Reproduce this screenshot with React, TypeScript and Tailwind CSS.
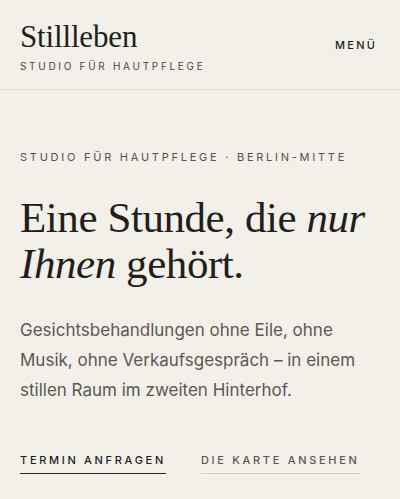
export default function App() {
  const serif = { fontFamily: '"Liberation Serif", "DejaVu Serif", serif' };
  return (
    <div className="min-h-[499px] w-full bg-[#f3f0ea] text-[#211e1b] font-['Inter',sans-serif]">
      <header className="flex items-start justify-between border-b border-[#dcd7cf] pl-5 pr-[23px] pt-[20px] pb-[17px]">
        <div>
          <div className="font-['Liberation_Serif',serif] text-[31px] leading-[34px] tracking-[-0.005em]">Stillleben</div>
          <div className="mt-[6px] text-[10px] leading-[12px] tracking-[0.27em] text-[#4a4642]">STUDIO FÜR HAUTPFLEGE</div>
        </div>
        <button className="mt-[17px] text-[11px] font-medium tracking-[0.2em] text-[#211e1b]">MENÜ</button>
      </header>

      <main className="px-5 pt-[60px]">
        <p className="text-[11px] leading-[14px] tracking-[0.25em] text-[#55514c]">
          STUDIO FÜR HAUTPFLEGE · BERLIN-MITTE
        </p>
        <h1 className="mt-[31px] text-[43px] leading-[46px] tracking-[-0.01em] font-normal" style={serif}>
          Eine Stunde, die <em>nur</em>
          <br />
          <em>Ihnen</em> gehört.
        </h1>
        <p className="mt-[28px] max-w-[340px] text-[17px] leading-[30px] text-[#5c5752]">
          Gesichtsbehandlungen ohne Eile, ohne Musik, ohne Verkaufsgespräch – in einem stillen Raum im zweiten Hinterhof.
        </p>
        <div className="mt-[47px] flex gap-[35px]">
          <a className="border-b-[1.5px] border-[#2a2725] pb-[4px] text-[11px] font-medium tracking-[0.245em] text-[#211e1b]">
            TERMIN ANFRAGEN
          </a>
          <a className="border-b border-[#d3cec6] pb-[4px] text-[11px] font-medium tracking-[0.245em] text-[#5a5650]">
            DIE KARTE ANSEHEN
          </a>
        </div>
      </main>
    </div>
  );
}
